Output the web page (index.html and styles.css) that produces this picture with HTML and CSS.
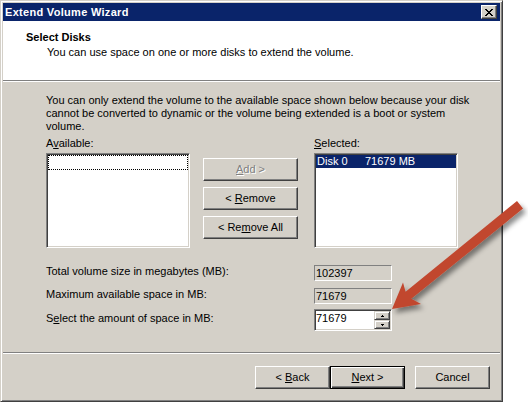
FILE: index.html
```html
<!DOCTYPE html>
<html>
<head>
<meta charset="utf-8">
<title>Extend Volume Wizard</title>
<link rel="stylesheet" href="styles.css">
</head>
<body>
<div class="window">
  <div class="titlebar">
    <span class="title">Extend Volume Wizard</span>
    <span class="close"><svg width="8" height="7" viewBox="0 0 8 7" shape-rendering="crispEdges"><path d="M0 0h2v1H0z M6 0h2v1H6z M1 1h2v1H1z M5 1h2v1H5z M2 2h4v1H2z M3 3h2v1H3z M2 4h4v1H2z M1 5h2v1H1z M5 5h2v1H5z M0 6h2v1H0z M6 6h2v1H6z" fill="#000"/></svg></span>
  </div>
  <div class="header">
    <h1>Select Disks</h1>
    <p>You can use space on one or more disks to extend the volume.</p>
  </div>
  <div class="sep"></div>
  <div class="main">
    <p class="intro">You can only extend the volume to the available space shown below because your disk<br>cannot be converted to dynamic or the volume being extended is a boot or system<br>volume.</p>
    <div class="pick">
      <div class="lbl">A<u>v</u>ailable:</div>
      <div></div>
      <div class="lbl"><u>S</u>elected:</div>
      <div class="list"><div class="focus"></div></div>
      <div class="btns">
        <button class="btn disabled"><span><u>A</u>dd &gt;</span></button>
        <button class="btn"><span>&lt; <u>R</u>emove</span></button>
        <button class="btn"><span>&lt; Re<u>m</u>ove All</span></button>
      </div>
      <div class="list"><div class="item sel"><span class="disk">Disk 0</span><span>71679 MB</span></div></div>
    </div>
    <div class="fields">
      <div class="row"><span class="flabel">Total volume size in megabytes (MB):</span><span class="ro">102397</span></div>
      <div class="row"><span class="flabel">Maximum available space in MB:</span><span class="ro">71679</span></div>
      <div class="row row-spin"><span class="flabel">S<u>e</u>lect the amount of space in MB:</span>
        <span class="spin">
          <span class="spin-val">71679</span>
          <span class="spin-btns">
            <span class="sbtn"><svg width="3" height="2" viewBox="0 0 3 2" shape-rendering="crispEdges"><path d="M1 0h1v1H1z M0 1h3v1H0z" fill="#000"/></svg></span>
            <span class="sbtn"><svg width="3" height="2" viewBox="0 0 3 2" shape-rendering="crispEdges"><path d="M0 0h3v1H0z M1 1h1v1H1z" fill="#000"/></svg></span>
          </span>
        </span>
      </div>
    </div>
  </div>
  <div class="sep"></div>
  <div class="footer">
    <button class="btn wbtn"><span>&lt; <u>B</u>ack</span></button>
    <button class="btn wbtn default"><span><u>N</u>ext &gt;</span></button>
    <button class="btn wbtn cancel"><span>Cancel</span></button>
  </div>
</div>
<svg class="arrow" width="528" height="402" viewBox="0 0 528 402">
  <defs>
    <filter id="sh" x="-20%" y="-20%" width="140%" height="140%">
      <feDropShadow dx="3" dy="4" stdDeviation="2.5" flood-color="#000" flood-opacity="0.45"/>
    </filter>
  </defs>
  <polygon filter="url(#sh)" fill="#c1472f" points="517,201 405.6,291.8 403,282.5 392,309 421,304 411.3,298.8 523,208.5"/>
</svg>
</body>
</html>
```
FILE: styles.css
```css
* { box-sizing: border-box; }

body {
  margin: 0;
  background: #fff;
  font: 11px/13px "Liberation Sans", Arial, sans-serif;
  color: #000;
  position: relative;
  width: 528px;
  height: 402px;
  overflow: hidden;
}

.window {
  width: 503px;
  height: 402px;
  background: #d4d0c8;
  border: 1px solid;
  border-color: #d4d0c8 #404040 #404040 #d4d0c8;
  box-shadow: inset 1px 1px #fff, inset -1px -1px #808080;
  padding: 2px 2px 1px 2px;
  display: flex;
  flex-direction: column;
}

.titlebar {
  flex: none;
  height: 18px;
  background: #0a246a;
  display: flex;
  align-items: center;
  justify-content: space-between;
  padding: 0 3px 0 2px;
}

.title {
  color: #fff;
  font-weight: bold;
  letter-spacing: 0.3px;
}

.close {
  width: 16px;
  height: 14px;
  background: #d4d0c8;
  border: 1px solid;
  border-color: #fff #404040 #404040 #fff;
  box-shadow: inset -1px -1px #808080;
  display: flex;
  align-items: center;
  justify-content: center;
  padding-right: 1px;
}

.header {
  flex: none;
  height: 59px;
  background: #fff;
  padding: 10px 0 0 23px;
}

.header h1 {
  margin: 0;
  font-size: 11px;
  line-height: 13px;
  font-weight: bold;
}

.header p {
  margin: 2px 0 0 21px;
}

.sep {
  flex: none;
  border-top: 1px solid #808080;
  border-bottom: 1px solid #fff;
}

.main {
  flex: none;
  height: 270px;
  padding: 12px 0 0 43px;
}

.intro {
  margin: 0;
  white-space: nowrap;
}

.pick {
  margin-top: 4px;
  display: grid;
  grid-template-columns: 144px 124px 144px;
  grid-template-rows: 13px 95px;
  row-gap: 3px;
}

.list {
  background: #fff;
  border: 1px solid;
  border-color: #808080 #fff #fff #808080;
  box-shadow: inset 1px 1px #404040, inset -1px -1px #d4d0c8;
  padding: 1px;
}

.focus {
  height: 15px;
  border: 1px dotted #000;
}

.item {
  height: 13px;
  display: flex;
  padding-left: 1px;
}

.item.sel {
  background: #0a246a;
  color: #fff;
}

.disk {
  width: 48px;
}

.btns {
  display: flex;
  flex-direction: column;
  gap: 6px;
  padding: 5px 0 0 13px;
}

.btn {
  font: inherit;
  color: #000;
  width: 95px;
  height: 23px;
  background: #d4d0c8;
  border: 1px solid;
  border-color: #fff #404040 #404040 #fff;
  box-shadow: inset -1px -1px #808080;
  padding: 0;
  display: flex;
  align-items: center;
  justify-content: center;
}

.btn.disabled {
  color: #808080;
  text-shadow: 1px 1px #fff;
}

.fields {
  margin-top: 17px;
}

.row {
  display: flex;
}

.row + .row {
  margin-top: 7px;
}

.row.row-spin {
  margin-top: 5px;
}

.flabel {
  width: 268px;
}

.row-spin .flabel {
  padding-top: 3px;
}

.ro {
  width: 78px;
  height: 16px;
  border: 1px solid;
  border-color: #808080 #fff #fff #808080;
  padding-left: 1px;
  line-height: 14px;
}

.spin {
  width: 78px;
  height: 22px;
  background: #fff;
  border: 1px solid;
  border-color: #808080 #fff #fff #808080;
  box-shadow: inset 1px 1px #404040, inset -1px -1px #d4d0c8;
  padding: 1px;
  display: flex;
}

.spin-val {
  flex: 1;
  line-height: 15px;
}

.spin-btns {
  width: 16px;
  display: flex;
  flex-direction: column;
}

.sbtn {
  height: 9px;
  background: #d4d0c8;
  border: 1px solid;
  border-color: #d4d0c8 #404040 #404040 #d4d0c8;
  box-shadow: inset 1px 1px #fff, inset -1px -1px #808080;
  display: flex;
  align-items: center;
  justify-content: center;
}

.footer {
  flex: none;
  height: 46px;
  display: flex;
  justify-content: flex-end;
  align-items: flex-start;
  padding: 12px 10px 0 0;
}

.wbtn {
  width: 75px;
}

.btn.default {
  border: 1px solid #000;
  box-shadow: inset 1px 1px #fff, inset -1px -1px #404040, inset -2px -2px #808080;
}

.btn.cancel {
  margin-left: 10px;
}

.arrow {
  position: absolute;
  left: 0;
  top: 0;
  pointer-events: none;
}
```
